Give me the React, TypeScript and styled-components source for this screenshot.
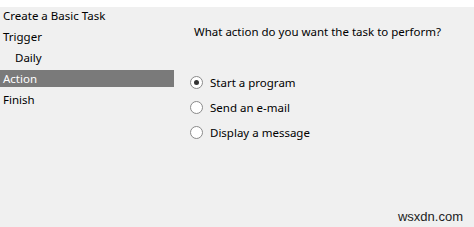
import styled, { createGlobalStyle } from "styled-components";

const GlobalStyle = createGlobalStyle`
  html, body {
    margin: 0;
    padding: 0;
    background: #ffffff;
  }
  body {
    font-family: "Noto Sans", "Open Sans", sans-serif;
    font-size: 11.5px;
    color: #000;
  }
`;

const Window = styled.div`
  width: 474px;
  height: 227px;
  display: flex;
  flex-direction: column;
  overflow: hidden;
`;

const TopStrip = styled.div`
  height: 7px;
  background: #ffffff;
`;

const Body = styled.div`
  flex: 1;
  display: flex;
  background: #f0f0f0;
  position: relative;
`;

const Nav = styled.div`
  width: 174px;
  display: flex;
  flex-direction: column;
  gap: 4px;
`;

const NavItem = styled.div<{ $active?: boolean; $indent?: boolean }>`
  height: 17px;
  line-height: 17px;
  padding-left: ${(p) => (p.$indent ? "15px" : "3px")};
  background: ${(p) => (p.$active ? "#7a7a7a" : "transparent")};
  color: ${(p) => (p.$active ? "#ffffff" : "#000000")};
  white-space: nowrap;
`;

const Content = styled.div`
  flex: 1;
  display: flex;
  flex-direction: column;
  padding-left: 20px;
  padding-top: 16px;
`;

const Question = styled.div`
  height: 17px;
  line-height: 17px;
`;

const Options = styled.div`
  display: flex;
  flex-direction: column;
  gap: 8px;
  margin-top: 34px;
  margin-left: -4px;
`;

const Option = styled.label`
  display: flex;
  align-items: center;
  gap: 7px;
  height: 17px;
  line-height: 17px;
`;

const Radio = styled.span<{ $checked?: boolean }>`
  width: 11px;
  height: 11px;
  border-radius: 50%;
  border: 1px solid #8a8a8a;
  background: #ffffff;
  display: flex;
  align-items: center;
  justify-content: center;

  &::after {
    content: "";
    width: 5px;
    height: 5px;
    border-radius: 50%;
    background: ${(p) => (p.$checked ? "#333333" : "transparent")};
  }
`;

const Watermark = styled.div`
  position: absolute;
  right: 11px;
  bottom: 3px;
  font-family: "Liberation Sans", Arial, sans-serif;
  font-size: 13px;
  color: #222;
`;

const navItems = [
  { label: "Create a Basic Task" },
  { label: "Trigger" },
  { label: "Daily", indent: true },
  { label: "Action", active: true },
  { label: "Finish" },
];

const options = [
  { label: "Start a program", checked: true },
  { label: "Send an e-mail" },
  { label: "Display a message" },
];

const App = () => {
  return (
    <Window>
      <GlobalStyle />
      <TopStrip />
      <Body>
        <Nav>
          {navItems.map((item) => (
            <NavItem key={item.label} $active={item.active} $indent={item.indent}>
              {item.label}
            </NavItem>
          ))}
        </Nav>
        <Content>
          <Question>What action do you want the task to perform?</Question>
          <Options>
            {options.map((o) => (
              <Option key={o.label}>
                <Radio $checked={o.checked} />
                {o.label}
              </Option>
            ))}
          </Options>
        </Content>
        <Watermark>wsxdn.com</Watermark>
      </Body>
    </Window>
  );
};

export default App;
